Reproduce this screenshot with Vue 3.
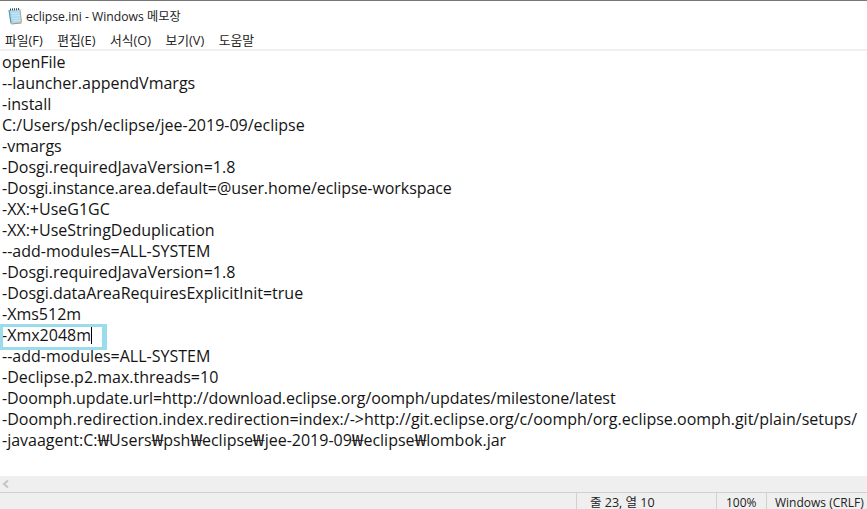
<script setup>
const lines = [
  'openFile',
  '--launcher.appendVmargs',
  '-install',
  'C:/Users/psh/eclipse/jee-2019-09/eclipse',
  '-vmargs',
  '-Dosgi.requiredJavaVersion=1.8',
  '-Dosgi.instance.area.default=@user.home/eclipse-workspace',
  '-XX:+UseG1GC',
  '-XX:+UseStringDeduplication',
  '--add-modules=ALL-SYSTEM',
  '-Dosgi.requiredJavaVersion=1.8',
  '-Dosgi.dataAreaRequiresExplicitInit=true',
  '-Xms512m',
  '-Xmx2048m',
  '--add-modules=ALL-SYSTEM',
  '-Declipse.p2.max.threads=10',
  '-Doomph.update.url=http://download.eclipse.org/oomph/updates/milestone/latest',
  '-Doomph.redirection.index.redirection=index:/->http://git.eclipse.org/c/oomph/org.eclipse.oomph.git/plain/setups/',
  '-javaagent:C:₩Users₩psh₩eclipse₩jee-2019-09₩eclipse₩lombok.jar',
].map((text, i) => ({ parts: text.split(/(₩)/), tight: i === 6 || i === 16, current: i === 13 }))
const menus = ['파일(F)', '편집(E)', '서식(O)', '보기(V)', '도움말']
</script>

<template>
  <div class="window">
    <header class="title">
      <svg class="icon" width="17" height="18" viewBox="0 0 17 18">
        <path d="M3 3 L14 2.500 L15.500 15 L5 16.500 Z" fill="#a9d9ee"/>
        <path d="M3 3 L5 16.500" stroke="#5f93ad" stroke-width="1.200" fill="none"/>
        <path d="M5.500 6.500 L13.500 6 M6 9 L14 8.500 M6.300 11.500 L14.300 11 M6.600 14 L14.600 13.500" stroke="#c9e8f5" stroke-width="1"/>
        <path d="M5 16.500 L15.500 15 L15.500 16.500 L5.500 17.500 Z" fill="#a89a80"/>
        <path d="M14 2.500 L15.500 15" stroke="#b3a88e" stroke-width="1" fill="none"/>
        <path d="M4 2.500 L14 2" stroke="#33495a" stroke-width="2" stroke-dasharray="1 1" fill="none"/>
      </svg>
      <span>eclipse.ini - Windows 메모장</span>
    </header>
    <nav class="menu">
      <span v-for="m in menus" :key="m">{{ m }}</span>
    </nav>
    <main class="editor">
      <div v-for="(l, i) in lines" :key="i" class="line" :class="{ tight: l.tight }">
        <span v-for="(p, j) in l.parts" :key="j" :class="{ won: p === '₩' }">{{ p }}</span><i v-if="l.current" class="caret"></i>
        <b v-if="l.current" class="mark"></b>
      </div>
    </main>
    <div class="hscroll">
      <svg width="8" height="10" viewBox="0 0 8 10"><path d="M6 1.500 L2 5 L6 8.500" fill="none" stroke="#c4c4c4" stroke-width="2"/></svg>
    </div>
    <footer class="status">
      <div class="s-blank"></div>
      <div class="s-pos">줄 23, 열 10</div>
      <div class="s-zoom">100%</div>
      <div class="s-enc">Windows (CRLF)</div>
    </footer>
  </div>
</template>

<style>
html, body { margin: 0; background: #fff; }
</style>

<style scoped>
.window {
  width: 867px;
  height: 509px;
  display: flex;
  flex-direction: column;
  overflow: hidden;
  background: #fff;
  color: #111;
  font-family: "Open Sans", "Noto Sans CJK KR", sans-serif;
}
.title {
  height: 28px;
  box-sizing: border-box;
  border-top: 1px solid #777;
  padding: 2px 0 0 6px;
  display: flex;
  align-items: center;
  gap: 3px;
  font-size: 12.2px;
  color: #222;
}
.menu {
  height: 21px;
  box-sizing: border-box;
  padding: 2px 0 0 5px;
  display: flex;
  align-items: center;
  gap: 14.5px;
  font-size: 12.800px;
  color: #222;
}
.editor {
  flex: 1;
  border-top: 2px solid #f0f0f0;
  padding: 1px 0 0 2px;
  font-size: 16px;
}
.line {
  height: 21px;
  line-height: 21px;
  white-space: nowrap;
  position: relative;
  color: #141414;
}
.tight { letter-spacing: -0.07px; }
.won {
  display: inline-block;
  margin: 0 1.35px;
  transform: scaleX(1.3);
}
.caret {
  display: inline-block;
  vertical-align: top;
  margin-top: 2px;
  width: 1px;
  height: 17px;
  background: #000;
}
.mark {
  position: absolute;
  left: -2px;
  top: -1px;
  width: 107px;
  height: 26px;
  box-sizing: border-box;
  border-style: solid;
  border-width: 3px 5px 3px 3px;
  border-color: #9bdcec;
}
.hscroll {
  height: 16px;
  background: #efefef;
  border-bottom: 1px solid #d0d0d0;
  display: flex;
  align-items: center;
  padding-left: 2px;
}
.status {
  height: 16px;
  background: #efefef;
  display: flex;
  font-size: 12px;
  line-height: 13px;
  color: #222;
}
.status > div { box-sizing: border-box; padding-top: 3px; white-space: nowrap; }
.s-blank { width: 576px; }
.s-pos { width: 140px; border-left: 1px solid #d0d0d0; padding-left: 13px; font-size: 12.500px; }
.s-zoom { width: 50px; border-left: 1px solid #d0d0d0; padding-left: 9px; }
.s-enc { flex: 1; border-left: 1px solid #d0d0d0; padding-left: 8px; }
</style>
